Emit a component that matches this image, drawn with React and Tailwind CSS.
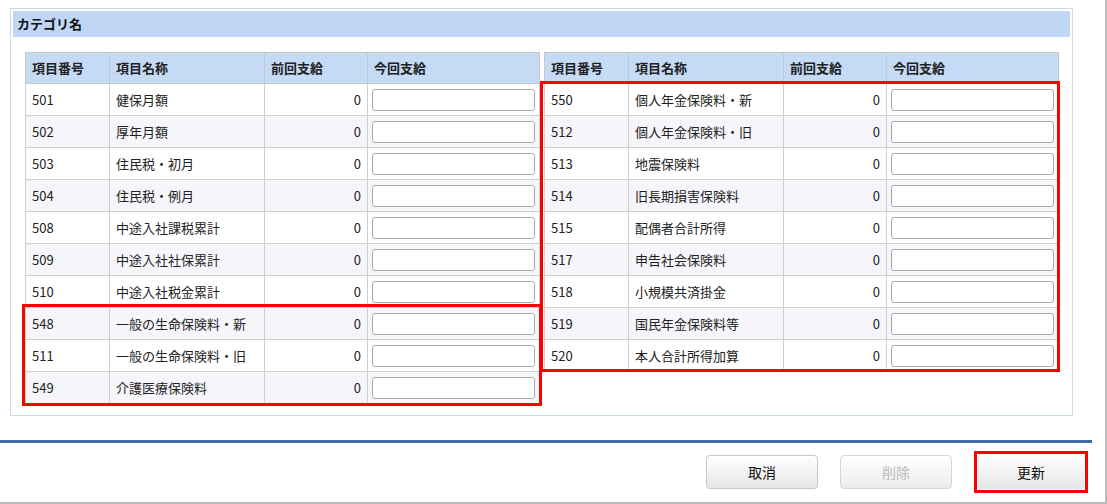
const L=[["501","健保月額"],["502","厚年月額"],["503","住民税・初月"],["504","住民税・例月"],["508","中途入社課税累計"],["509","中途入社社保累計"],["510","中途入社税金累計"],["548","一般の生命保険料・新"],["511","一般の生命保険料・旧"],["549","介護医療保険料"]];
const R=[["550","個人年金保険料・新"],["512","個人年金保険料・旧"],["513","地震保険料"],["514","旧長期損害保険料"],["515","配偶者合計所得"],["517","申告社会保険料"],["518","小規模共済掛金"],["519","国民年金保険料等"],["520","本人合計所得加算"]];
function T({rows}){return(
<table className="border-collapse text-[13px] text-[#222] w-[515px] table-fixed">
<colgroup><col className="w-[84px]"/><col className="w-[155px]"/><col className="w-[103px]"/><col/></colgroup>
<thead><tr className="bg-[#c4daf5] h-[31px] font-bold">{["項目番号","項目名称","前回支給","今回支給"].map(h=><th key={h} className="border border-[#c8c8c8] text-left px-[6px] font-bold">{h}</th>)}</tr></thead>
<tbody>{rows.map(([a,b],i)=><tr key={a} className={`h-[32px] ${i%2?"bg-[#f6f6fa]":"bg-white"}`}>
<td className="border border-[#d0d0d0] px-[6px]">{a}</td><td className="border border-[#d0d0d0] px-[6px]">{b}</td><td className="border border-[#d0d0d0] px-[6px] text-right">0</td>
<td className="border border-[#d0d0d0] px-[4px]"><div className="h-[22px] bg-white border border-[#aaa] rounded-[3px]"/></td></tr>)}</tbody></table>)}
export default function App(){return(
<div className="w-[1107px] h-[504px] bg-white border-r-2 border-b-2 border-[#bbb] relative" style={{fontFamily:'"Noto Sans CJK JP","Noto Sans",sans-serif'}}>
<div className="pt-[8px] pl-[10px] w-[1073px]">
<div className="border border-[#c8daf0] h-[408px] p-[2px]">
<div className="bg-[#bfd7f5] h-[26px] px-[4px] flex items-center text-[13px] font-bold text-[#111]">カテゴリ名</div>
<div className="flex items-start gap-[4px] pl-[12px] pt-[15px]"><T rows={L}/><T rows={R}/></div>
</div></div>
<div className="mt-[24px] h-[3px] w-[1092px] bg-[#3a6ea5]"/>
<div className="flex items-center pl-[706px] pt-[8px] gap-[22px] text-[14px]">
<div className="w-[112px] h-[34px] rounded-[4px] border border-[#c8c8c8] bg-gradient-to-b from-white to-[#e6e6e6] flex items-center justify-center text-[#111]">取消</div>
<div className="w-[112px] h-[34px] rounded-[4px] border border-[#d8d8d8] bg-gradient-to-b from-white to-[#ececec] flex items-center justify-center text-[#bbb]">削除</div>
<div className="w-[114px] h-[42px] border-[3px] border-[#f00] flex items-center justify-center"><div className="w-[106px] h-[34px] rounded-[2px] bg-gradient-to-b from-white to-[#e6e6e6] flex items-center justify-center text-[#111]">更新</div></div>
</div>
<div className="absolute left-[22px] top-[304px] w-[520px] h-[102px] border-[3px] border-[#f00]"/>
<div className="absolute left-[540px] top-[81px] w-[520px] h-[291px] border-[3px] border-[#f00]"/>
</div>)}
